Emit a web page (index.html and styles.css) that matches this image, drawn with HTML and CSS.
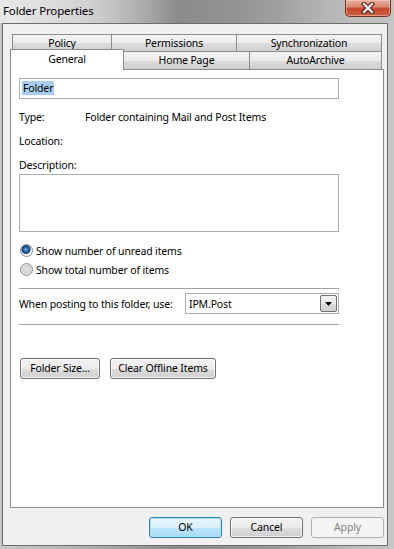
FILE: index.html
```html
<!DOCTYPE html>
<html lang="en">
<head>
    <meta charset="UTF-8">
    <meta name="viewport" content="width=device-width, initial-scale=1.0">
    <title>Folder Properties</title>
    <link rel="stylesheet" href="styles.css">
</head>
<body>
    <div class="window">
        <div class="titlebar">
            <span class="title">Folder Properties</span>
            <div class="close">
                <svg width="16" height="12" viewBox="0 0 16 12">
                    <path d="M4 2 L12 10 M12 2 L4 10" stroke="#5b2219" stroke-width="4.5" stroke-linecap="square"/>
                    <path d="M4 2 L12 10 M12 2 L4 10" stroke="#ffffff" stroke-width="2.2" stroke-linecap="square"/>
                </svg>
            </div>
        </div>
        <div class="client">
            <div class="tabRow backRow">
                <div class="tab" style="width:100px">Policy</div>
                <div class="tab" style="width:125px">Permissions</div>
                <div class="tab" style="width:145px">Synchronization</div>
            </div>
            <div class="tabRow">
                <div class="tab selected" style="width:114px">General</div>
                <div class="tab" style="width:126px">Home Page</div>
                <div class="tab" style="width:132px">AutoArchive</div>
            </div>
            <div class="panel">
                <div class="nameBox"><span class="selText">Folder</span></div>
                <div class="infoRow first"><span class="label">Type:</span><span>Folder containing Mail and Post Items</span></div>
                <div class="infoRow"><span class="label">Location:</span><span></span></div>
                <div class="infoRow"><span class="label">Description:</span></div>
                <div class="descBox"></div>
                <div class="radioRow first"><span class="radio on"></span>Show number of unread items</div>
                <div class="radioRow"><span class="radio"></span>Show total number of items</div>
                <div class="separator"></div>
                <div class="postRow">
                    <span class="postLabel">When posting to this folder, use:</span>
                    <div class="combo">
                        <span>IPM.Post</span>
                        <div class="comboBtn">
                            <svg width="7" height="4" viewBox="0 0 7 4"><path d="M0 0 H7 L3.5 4 Z" fill="#000"/></svg>
                        </div>
                    </div>
                </div>
                <div class="separator second"></div>
                <div class="actionRow">
                    <div class="btn" style="width:80px">Folder Size...</div>
                    <div class="btn" style="width:106px">Clear Offline Items</div>
                </div>
            </div>
            <div class="footer">
                <div class="btn default">OK</div>
                <div class="btn">Cancel</div>
                <div class="btn disabled">Apply</div>
            </div>
        </div>
    </div>
</body>
</html>
```
FILE: styles.css
```css
*{
    box-sizing: border-box;
    margin: 0;
    padding: 0;
}
body{
    font-family: 'Noto Sans', 'Open Sans', sans-serif;
    font-size: 10.5px;
    letter-spacing: -0.15px;
    color: #000;
    background: #fff;
}
.window{
    width: 394px;
    height: 549px;
    display: flex;
    flex-direction: column;
    background: linear-gradient(to right, #c9c9c9 0%, #b2b2b2 20%, #8a8a8a 45%, #9a9a9a 70%, #bdbdbd 90%, #c6c6c6 100%);
}
.titlebar{
    height: 23px;
    display: flex;
    justify-content: space-between;
    background: linear-gradient(to right, rgba(235,235,235,0.9) 0%, rgba(225,225,225,0.7) 22%, rgba(150,150,150,0.1) 45%, rgba(120,120,120,0) 60%, rgba(190,190,190,0.3) 85%);
}
.title{
    padding: 3px 0 0 3px;
    font-size: 11.5px;
    line-height: 16px;
}
.close{
    width: 46px;
    height: 17px;
    margin-right: 3px;
    border: 1px solid #6b3128;
    border-top: none;
    border-radius: 0 0 5px 5px;
    background: linear-gradient(to bottom, #eab0a0 0%, #dc8a74 40%, #c4452c 55%, #cf6244 100%);
    box-shadow: inset 0 0 0 1px rgba(255,210,200,0.5);
    display: flex;
    align-items: center;
    justify-content: center;
}
.client{
    flex: 1;
    margin: 0 6px 3px 2px;
    border: 1px solid #6d6d6d;
    background: #f0f0f0;
    padding: 10px 3px 0 7px;
    display: flex;
    flex-direction: column;
}
.tabRow{
    display: flex;
    height: 18px;
}
.backRow{
    height: 17px;
    padding-left: 2px;
}
.tab{
    border: 1px solid #898c95;
    border-bottom: none;
    background: linear-gradient(to bottom, #f3f3f3 0%, #ebebeb 50%, #dddddd 51%, #cfcfcf 100%);
    text-align: center;
    line-height: 16px;
    white-space: nowrap;
}
.tab + .tab{
    border-left: none;
}
.tab.selected{
    position: relative;
    z-index: 1;
    margin-top: -2px;
    height: 21px;
    background: #fff;
    line-height: 19px;
}
.panel{
    height: 439px;
    background: #fff;
    border: 1px solid #898c95;
    padding: 0 0 0 8px;
}
.nameBox{
    width: 320px;
    height: 21px;
    margin-top: 8px;
    border: 1px solid #abadb3;
    padding: 0 0 0 2px;
    line-height: 19px;
}
.selText{
    background: #a7cdf0;
    padding: 0 1px;
}
.infoRow{
    display: flex;
    line-height: 15px;
    margin-top: 9px;
}
.infoRow.first{
    margin-top: 11px;
}
.label{
    width: 66px;
}
.descBox{
    width: 320px;
    height: 58px;
    margin-top: 1px;
    border: 1px solid #abadb3;
}
.radioRow{
    display: flex;
    align-items: center;
    height: 19px;
    gap: 3px;
    padding-left: 1px;
}
.radioRow.first{
    margin-top: 9px;
}
.radio{
    width: 13px;
    height: 13px;
    border-radius: 50%;
    border: 1px solid #8c8e8f;
    background: radial-gradient(circle at 50% 50%, #e8e8e8 0, #d2d2d2 4px, #f4f4f4 6px);
}
.radio.on{
    background: radial-gradient(circle at 45% 40%, #8fc1ec 0, #2c6cb4 2px, #173f70 4px, #e7e7e7 5px, #f4f4f4 6px);
}
.separator{
    width: 320px;
    height: 1px;
    margin-top: 9px;
    background: #a0a0a0;
}
.postRow{
    display: flex;
    align-items: center;
    margin-top: 4px;
}
.postLabel{
    width: 166px;
    white-space: nowrap;
}
.combo{
    width: 154px;
    height: 21px;
    border: 1px solid #abadb3;
    display: flex;
    align-items: center;
    justify-content: space-between;
    padding: 0 1px 0 3px;
}
.comboBtn{
    width: 17px;
    height: 17px;
    border: 1px solid #707070;
    border-radius: 2px;
    background: linear-gradient(to bottom, #f2f2f2 0%, #ebebeb 50%, #dddddd 51%, #cfcfcf 100%);
    display: flex;
    align-items: center;
    justify-content: center;
}
.separator.second{
    margin-top: 10px;
}
.actionRow{
    display: flex;
    gap: 10px;
    margin-top: 33px;
    padding-left: 1px;
}
.btn{
    width: 73px;
    height: 21px;
    border: 1px solid #707070;
    border-radius: 3px;
    background: linear-gradient(to bottom, #f2f2f2 0%, #ebebeb 50%, #dddddd 51%, #cfcfcf 100%);
    box-shadow: inset 0 0 0 1px rgba(255,255,255,0.7);
    text-align: center;
    line-height: 19px;
    white-space: nowrap;
}
.footer{
    display: flex;
    justify-content: flex-end;
    gap: 8px;
    margin-top: 9px;
}
.btn.default{
    border-color: #3c7fb1;
    background: linear-gradient(to bottom, #eaf6fd 0%, #d9f0fc 50%, #bee6fd 51%, #a7d9f5 100%);
    box-shadow: inset 0 0 0 1px #9fe0fb;
}
.btn.disabled{
    border-color: #adb2b5;
    background: #f4f4f4;
    box-shadow: none;
    color: #838383;
}
```
